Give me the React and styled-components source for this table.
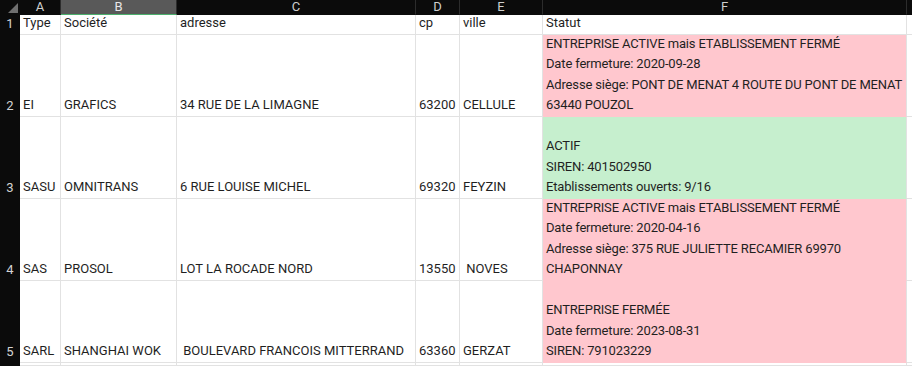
import React from "react";
import styled, { createGlobalStyle } from "styled-components";

const Global = createGlobalStyle`
  html, body { margin: 0; padding: 0; background: #ffffff; }
  body { font-family: Roboto, "Noto Sans", "Liberation Sans", sans-serif; }
`;

const COLS = [
  { key: "A", w: 41 },
  { key: "B", w: 116 },
  { key: "C", w: 239 },
  { key: "D", w: 44 },
  { key: "E", w: 83 },
  { key: "F", w: 364 },
];

const Sheet = styled.div`
  display: grid;
  grid-template-columns: 20px ${COLS.map((c) => c.w + "px").join(" ")} 1fr;
  grid-template-rows: 15px 20px repeat(4, 82px) 1fr;
  width: 912px;
  height: 366px;
  overflow: hidden;
  font-size: 13px;
  color: #1f1f1f;
`;

const Corner = styled.div`
  background: #0b0b0b;
  position: relative;
  &::after {
    content: "";
    position: absolute;
    right: 2px;
    bottom: 2px;
    width: 0;
    height: 0;
    border-left: 10px solid transparent;
    border-bottom: 10px solid #6f6f6f;
  }
`;

const ColHead = styled.div`
  background: ${(p) => (p.$selected ? "#595959" : "#0b0b0b")};
  color: ${(p) => (p.$selected ? "#e8e8e8" : "#cfcfcf")};
  border-right: 1px solid #2c2c2c;
  border-bottom: 1px solid ${(p) => (p.$selected ? "#4caf6d" : "#0b0b0b")};
  box-sizing: border-box;
  display: flex;
  align-items: center;
  justify-content: center;
  font-size: 13px;
  line-height: 14px;
`;

const RowHead = styled.div`
  background: #0b0b0b;
  color: #d4d4d4;
  display: flex;
  align-items: flex-end;
  justify-content: center;
  padding-bottom: 3px;
  box-sizing: border-box;
  font-size: 13px;
  line-height: 16px;
`;

const Cell = styled.div`
  background: ${(p) => p.$fill || "#ffffff"};
  border-right: 1px solid #e2e2e2;
  border-bottom: 1px solid ${(p) => p.$fill || "#e2e2e2"};
  box-sizing: border-box;
  display: flex;
  align-items: flex-end;
  padding: 0 2px 0 3px;
  white-space: pre;
  line-height: 20.6px;
  overflow: visible;
  min-width: 0;
`;

const Lines = styled.div`
  display: flex;
  flex-direction: column;
  letter-spacing: -0.16px;
`;

const PINK = "#ffc7ce";
const GREEN = "#c6efce";

const rows = [
  {
    n: 1,
    cells: ["Type", "Société", "adresse", "cp", "ville", "Statut"],
  },
  {
    n: 2,
    cells: ["EI", "GRAFICS", "34 RUE DE LA LIMAGNE", "63200", "CELLULE"],
    fill: PINK,
    status: [
      "ENTREPRISE ACTIVE mais ETABLISSEMENT FERMÉ",
      "Date fermeture: 2020-09-28",
      "Adresse siège: PONT DE MENAT 4 ROUTE DU PONT DE MENAT",
      "63440 POUZOL",
    ],
  },
  {
    n: 3,
    cells: ["SASU", "OMNITRANS", "6 RUE LOUISE MICHEL", "69320", "FEYZIN"],
    fill: GREEN,
    status: ["ACTIF", "SIREN: 401502950", "Etablissements ouverts: 9/16"],
  },
  {
    n: 4,
    cells: ["SAS", "PROSOL", "LOT LA ROCADE NORD", "13550", " NOVES"],
    fill: PINK,
    status: [
      "ENTREPRISE ACTIVE mais ETABLISSEMENT FERMÉ",
      "Date fermeture: 2020-04-16",
      "Adresse siège: 375 RUE JULIETTE RECAMIER 69970",
      "CHAPONNAY",
    ],
  },
  {
    n: 5,
    cells: ["SARL", "SHANGHAI WOK", " BOULEVARD FRANCOIS MITTERRAND", "63360", "GERZAT"],
    fill: PINK,
    status: ["ENTREPRISE FERMÉE", "Date fermeture: 2023-08-31", "SIREN: 791023229"],
  },
];

export default function App() {
  return (
    <>
      <Global />
      <Sheet>
        <Corner />
        {COLS.map((c) => (
          <ColHead key={c.key} $selected={c.key === "B"}>
            {c.key}
          </ColHead>
        ))}
        <ColHead />
        {rows.map((r) => (
          <React.Fragment key={r.n}>
            <RowHead>{r.n}</RowHead>
            {r.cells.slice(0, 5).map((t, i) => (
              <Cell key={i}>{t}</Cell>
            ))}
            {r.status ? (
              <Cell $fill={r.fill}>
                <Lines>
                  {r.status.map((l, i) => (
                    <span key={i}>{l}</span>
                  ))}
                </Lines>
              </Cell>
            ) : (
              <Cell>{r.cells[5]}</Cell>
            )}
            <Cell />
          </React.Fragment>
        ))}
        <RowHead />
        {COLS.map((c) => (
          <Cell key={c.key} />
        ))}
        <Cell />
      </Sheet>
    </>
  );
}
